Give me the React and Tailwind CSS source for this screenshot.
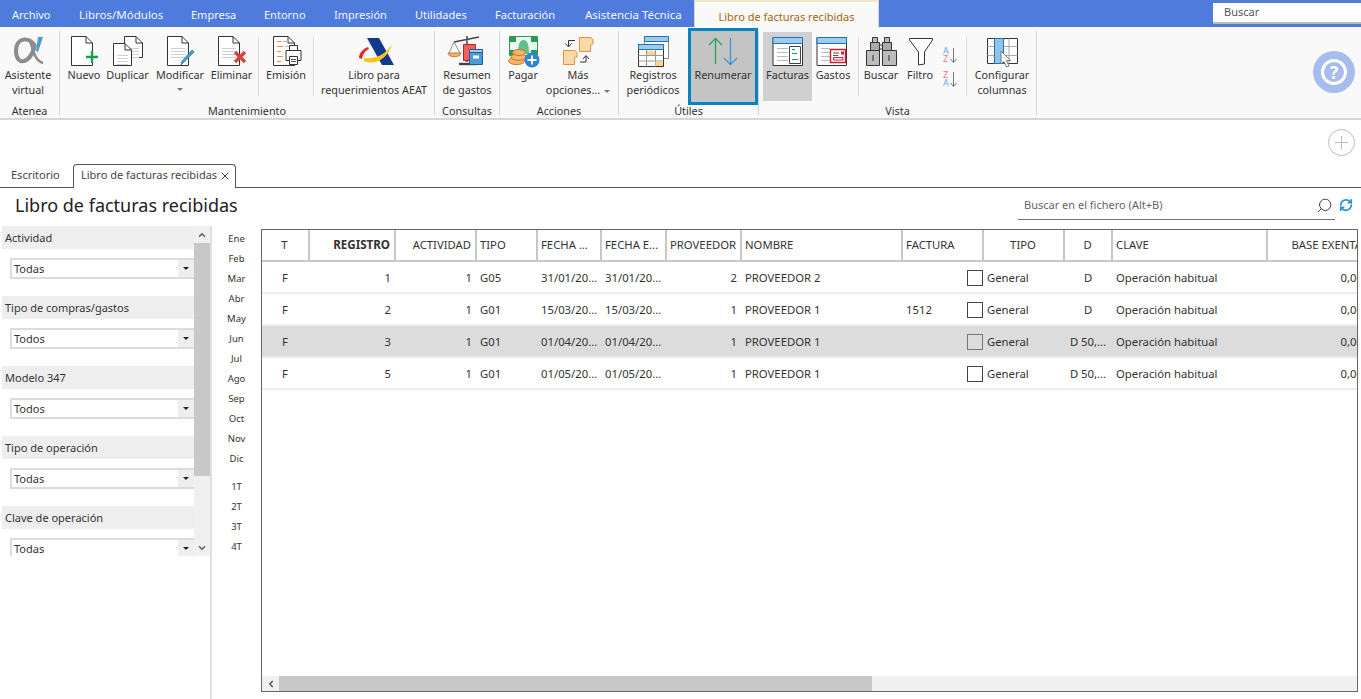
import React from 'react';
import { ChevronUp, ChevronDown, ChevronLeft, X, Search, RefreshCw } from 'lucide-react';

const Svg = ({ children }) => (
  <svg width="48" height="34" viewBox="0 0 48 34" fill="none" className="block shrink-0 overflow-visible">
    {children}
  </svg>
);

// hoja con la esquina doblada
const Doc = ({ x, y, w, h, lines = false }) => (
  <g stroke="#333" strokeWidth="1">
    <path d={`M${x + 0.5} ${y + 0.5}H${x + w - 7}L${x + w - 0.5} ${y + 7}V${y + h - 0.5}H${x + 0.5}Z`} fill="#fff" />
    <path d={`M${x + w - 7} ${y + 0.5}V${y + 7}H${x + w - 0.5}`} />
    {lines && (
      <g stroke="#d0d0d0">
        <path d={`M${x + 4} ${y + 12.5}H${x + w - 4}M${x + 4} ${y + 15.5}H${x + w - 4}M${x + 4} ${y + 18.5}H${x + w - 4}M${x + 4} ${y + 21.5}H${x + w - 4}`} />
      </g>
    )}
  </g>
);

const icons = {
  alpha: (
    <Svg>
      <path d="M31 12C27 3 12 2 12 17C12 32 26 31 31 11" stroke="#8c8c8c" strokeWidth="4" />
      <path d="M24 5C29 8 28 26 39 29" stroke="#8c8c8c" strokeWidth="2.6" />
      <path d="M34 3L39 3L34 18L32 17Z" fill="#4a9bd8" />
    </Svg>
  ),
  nuevo: (
    <Svg>
      <Doc x={11} y={2} w={22} h={30} />
      <path d="M26 23H38M32 17V29" stroke="#12a150" strokeWidth="2.4" />
    </Svg>
  ),
  duplicar: (
    <Svg>
      <Doc x={20} y={2} w={19} h={22} lines />
      <Doc x={9} y={9} w={19} h={23} lines />
    </Svg>
  ),
  modificar: (
    <Svg>
      <Doc x={11} y={2} w={22} h={30} lines />
      <path d="M38 18L28 28L25 31L26 27L36 16Z" fill="#4a9bd8" stroke="#2a7ab8" strokeWidth="0.8" />
    </Svg>
  ),
  eliminar: (
    <Svg>
      <Doc x={10} y={2} w={22} h={30} lines />
      <path d="M27 18L37 28M37 18L27 28" stroke="#e23d3d" strokeWidth="3.2" />
    </Svg>
  ),
  emision: (
    <Svg>
      <Doc x={11} y={2} w={22} h={30} />
      <path d="M15 7.5H19M15 12.5H21M15 17.5H19M15 22.5H21M15 27.5H19" stroke="#e8963c" />
      <path d="M21 7.5H26M23 12.5H28" stroke="#bbb" />
      <path d="M27.5 11.5H35.5V16.5H27.5Z" fill="#fff" stroke="#333" />
      <path d="M24 16.5H39V26.5H24Z" fill="#fff" stroke="#333" />
      <path d="M27.5 22.5H35.5V30.5H27.5Z" fill="#fff" stroke="#333" />
      <path d="M29 25.5H34M29 27.5H34" stroke="#555" />
    </Svg>
  ),
  aeat: (
    <Svg>
      <path d="M17 4H29L44 31H32Z" fill="#123a8c" />
      <path d="M14 27C26 32 38 24 42 10C38 16 30 26 14 24Z" fill="#f7c51e" />
      <path d="M9 24C9 19 13 15 18 13L19 15C15 17 13 20 12 25Z" fill="#e02a2a" />
    </Svg>
  ),
  resumen: (
    <Svg>
      <path d="M24 2V28M11 8L36 3" stroke="#444" strokeWidth="1.5" />
      <path d="M11 8L6 19M11 8L17 19" stroke="#777" strokeWidth="0.8" />
      <path d="M5 19H18C17 24 6 24 5 19Z" fill="#f2b36b" stroke="#c57a2a" />
      <path d="M16 30H34" stroke="#444" strokeWidth="2.4" />
      <path d="M20.5 10.5H32.5V26.5H20.5Z" fill="#f25d5d" stroke="#b02525" />
      <path d="M26.5 15.5H39.5V30.5H26.5Z" fill="#4a9bd8" stroke="#1f5f96" />
      <path d="M26.5 15.5H39.5V18.5H26.5Z" fill="#9fcbee" stroke="#1f5f96" />
      <path d="M30 21.5H36V24.5H30Z" fill="#fff" />
    </Svg>
  ),
  pagar: (
    <Svg>
      <path d="M10.5 2.5H38.5V21.5H10.5Z" fill="#eaf7ef" stroke="#2a9a55" />
      <path d="M11 3H17V8H11ZM32 3H38V8H32ZM11 16H17V21H11ZM32 16H38V21H32Z" fill="#2a9a55" />
      <path d="M19 20C19 10 21 6 24.5 6C28 6 30 10 30 20Z" fill="#5fc08a" />
      <ellipse cx="17.5" cy="27" rx="8" ry="3.6" fill="#f5b56c" stroke="#c9772a" />
      <ellipse cx="19.5" cy="23" rx="7.5" ry="3.3" fill="#f5b56c" stroke="#c9772a" />
      <ellipse cx="20" cy="18.5" rx="6.5" ry="3" fill="#f5b56c" stroke="#c9772a" />
      <circle cx="33" cy="26" r="7.5" fill="#2d86cf" />
      <path d="M33 21.5V30.5M28.5 26H37.5" stroke="#fff" strokeWidth="1.8" />
    </Svg>
  ),
  mas: (
    <Svg>
      <path d="M25.5 3.5H36.5L39 5.5V10L36.5 11V17.5H25.5Z" fill="#fbd9a9" stroke="#e0913c" />
      <path d="M9.5 16.5H20.5L23 18.5V23L20.5 24V30.5H9.5Z" fill="#fbd9a9" stroke="#e0913c" />
      <path d="M21 6.5H14.5V12M11.5 9.5L14.5 13L17.5 9.5" stroke="#333" />
      <path d="M26 28H32V22M29 25L32 21.5L35 25" stroke="#333" />
    </Svg>
  ),
  registros: (
    <Svg>
      <path d="M15.5 2.5H39.5V24.5H15.5Z" fill="#fff" stroke="#888" />
      <path d="M15.5 2.5H39.5V7.5H15.5Z" fill="#9fcbee" stroke="#1f73b0" />
      <path d="M9.5 10.5H34.5V32.5H9.5Z" fill="#fff" stroke="#333" />
      <path d="M9.5 10.5H34.5V15.5H9.5Z" fill="#9fcbee" stroke="#1f73b0" />
      <path d="M17.5 15.5V32.5M26.5 15.5V32.5M9.5 21.5H34.5M9.5 27H34.5" stroke="#999" />
      <path d="M18 17H26V21H18ZM26.5 27.5H34V32H26.5Z" fill="#f8d58e" />
    </Svg>
  ),
  renumerar: (
    <Svg>
      <path d="M16.5 30V5M10 11L16.5 4.5L23 11" stroke="#27a35c" strokeWidth="1.3" />
      <path d="M31.5 4V30M25 24L31.5 30.5L38 24" stroke="#3d94d6" strokeWidth="1.3" />
    </Svg>
  ),
  facturas: (
    <Svg>
      <path d="M9 3.5H38.5V31.5H9Z" fill="#fff" stroke="#333" />
      <path d="M9 3.5H38.5V9.5H9Z" fill="#9fcbee" stroke="#1f73b0" />
      <path d="M13 14.5H24M13 18.5H24M13 22.5H24M13 26.5H24" stroke="#bbb" />
      <path d="M25.5 12.5H36.5V29.5H25.5Z" fill="#fff" stroke="#444" />
      <path d="M28 15.5H31M28 19.5H33M28 25.5H34" stroke="#12a150" />
    </Svg>
  ),
  gastos: (
    <Svg>
      <path d="M8 3.5H37.5V31.5H8Z" fill="#fff" stroke="#333" />
      <path d="M8 3.5H37.5V9.5H8Z" fill="#9fcbee" stroke="#1f73b0" />
      <path d="M12 14.5H21M12 18.5H21M12 22.5H21M12 26.5H21" stroke="#bbb" />
      <path d="M21.5 15.5H36.5V28.5H21.5Z" fill="#fff" stroke="#c8202f" strokeWidth="1.4" />
      <path d="M24 19H30M24 21.5H29" stroke="#555" />
      <path d="M32 17.5H35V20.5H32Z" fill="#c8202f" />
      <path d="M24.5 23.5H34V26H24.5Z" stroke="#c8202f" />
    </Svg>
  ),
  buscar: (
    <Svg>
      <path d="M15.5 3.5H20.5V9.5H15.5ZM27.5 3.5H32.5V9.5H27.5Z" fill="#bbb" stroke="#333" />
      <path d="M13.5 8.5H22.5V18.5H13.5ZM25.5 8.5H34.5V18.5H25.5Z" fill="#aaa" stroke="#333" />
      <path d="M9.5 16.5H22.5V31.5H9.5ZM25.5 16.5H39.5V31.5H25.5Z" fill="#bcbcbc" stroke="#333" />
      <path d="M22.5 11H25.5V15H22.5Z" fill="#fff" stroke="#333" />
      <path d="M16 21V27M32 21V27" stroke="#333" />
    </Svg>
  ),
  filtro: (
    <Svg>
      <path d="M13.5 4.5H36.5V6L28.5 18V30L22.5 31V18L13.5 6Z" fill="#fff" stroke="#333" />
    </Svg>
  ),
  configurar: (
    <Svg>
      <path d="M9.5 4.5H39.5V29.5H9.5Z" fill="#fff" stroke="#333" />
      <path d="M9.5 12.5H39.5M9.5 21.5H39.5M31 4.5V29.5" stroke="#aaa" />
      <path d="M16.5 4.5H25.5V29.5H16.5Z" fill="#8fc3ec" stroke="#1f73b0" />
      <path d="M23 17L23 30L26 27.5L28.5 33L31 32L28.5 26.5H32.5Z" fill="#fff" stroke="#777" />
    </Svg>
  ),
};

const SortIcon = ({ first, second, firstColor, secondColor }) => (
  <div className="relative h-[16px] w-[16px]">
    <span className={`absolute left-0 top-0 text-[9px] leading-[8px] ${firstColor}`}>{first}</span>
    <span className={`absolute left-0 top-[8px] text-[9px] leading-[8px] ${secondColor}`}>{second}</span>
    <svg width="16" height="16" viewBox="0 0 16 16" fill="none" className="absolute left-0 top-0">
      <path d="M10.5 1V15M7.5 12L10.5 15.5L13.5 12" stroke="#777" />
    </svg>
  </div>
);

const Sep = ({ className }) => <div className={`mt-[6px] h-[59px] w-px shrink-0 bg-[#dcdcdc] ${className}`} />;

const RibbonButton = ({ icon, lines, className = '', caret, inlineCaret }) => (
  <div className={`flex h-full shrink-0 flex-col items-center pt-[3px] text-center leading-[15px] text-[#333] ${className}`}>
    <div className="mb-[-1px]">{icons[icon]}</div>
    {lines.map((t, i) => (
      <div key={i} className="whitespace-nowrap">
        {t}
        {inlineCaret && i === lines.length - 1 && <span className="ml-[4px] inline-block h-0 w-0 border-x-[3px] border-t-[3px] border-x-transparent border-t-[#777] align-middle" />}
      </div>
    ))}
    {caret && <span className="mt-[6px] h-0 w-0 border-x-[3px] border-t-[3px] border-x-transparent border-t-[#777]" />}
  </div>
);

const Group = ({ label, className, children }) => (
  <div className={`flex h-[84px] shrink-0 flex-col border-r border-[#d4d4d4] ${className}`}>
    <div className="flex h-[73px]">{children}</div>
    <div className="h-[11px] text-center leading-[14px] text-[#333]">{label}</div>
  </div>
);

const Ribbon = () => (
  <div className="flex h-[93px] items-start border-b-2 border-[#d6d6d6] bg-[#f9f9f9] pt-[4px] text-[10.8px]">
    <Group label="Atenea" className="w-[60px]">
      <RibbonButton icon="alpha" lines={['Asistente', 'virtual']} className="w-[56px]" />
    </Group>
    <Group label="Mantenimiento" className="w-[375px]">
      <RibbonButton icon="nuevo" lines={['Nuevo']} className="ml-[6px] w-[36px]" />
      <RibbonButton icon="duplicar" lines={['Duplicar']} className="ml-[3px] w-[45px]" />
      <RibbonButton icon="modificar" lines={['Modificar']} caret className="ml-[5px] w-[50px]" />
      <RibbonButton icon="eliminar" lines={['Eliminar']} className="ml-[5px] w-[43px]" />
      <Sep className="ml-[5px]" />
      <RibbonButton icon="emision" lines={['Emisión']} className="ml-[6px] w-[42px]" />
      <Sep className="ml-[6px]" />
      <RibbonButton icon="aeat" lines={['Libro para', 'requerimientos AEAT']} className="ml-[6px] w-[108px]" />
    </Group>
    <Group label="Consultas" className="w-[65px]">
      <RibbonButton icon="resumen" lines={['Resumen', 'de gastos']} className="w-[64px]" />
    </Group>
    <Group label="Acciones" className="w-[119px]">
      <RibbonButton icon="pagar" lines={['Pagar']} className="ml-[6px] w-[34px]" />
      <RibbonButton icon="mas" lines={['Más', 'opciones...']} inlineCaret className="ml-[8px] w-[60px]" />
    </Group>
    <Group label="Útiles" className="w-[140px]">
      <RibbonButton icon="registros" lines={['Registros', 'periódicos']} className="ml-[6px] w-[56px]" />
      <RibbonButton icon="renumerar" lines={['Renumerar']} className="relative z-10 -mt-[3px] ml-[7px] !h-[77px] w-[70px] border-[3px] border-[#0a82bf] bg-[#c4c4c4]" />
    </Group>
    <Group label="Vista" className="w-[278px]">
      <RibbonButton icon="facturas" lines={['Facturas']} className="ml-[4px] mt-[1px] !h-[69px] w-[49px] bg-[#d0d0d0] !pt-[2px]" />
      <RibbonButton icon="gastos" lines={['Gastos']} className="ml-[1px] w-[40px]" />
      <Sep className="ml-[5px]" />
      <RibbonButton icon="buscar" lines={['Buscar']} className="ml-[5px] w-[34px]" />
      <RibbonButton icon="filtro" lines={['Filtro']} className="ml-[5px] w-[34px]" />
      <div className="ml-[6px] flex w-[16px] shrink-0 flex-col gap-[8px] pt-[16px]">
        <SortIcon first="A" second="Z" firstColor="text-[#6aa8e0]" secondColor="text-[#e87a7a]" />
        <SortIcon first="Z" second="A" firstColor="text-[#e87a7a]" secondColor="text-[#6aa8e0]" />
      </div>
      <Sep className="ml-[7px]" />
      <RibbonButton icon="configurar" lines={['Configurar', 'columnas']} className="ml-[3px] w-[64px]" />
    </Group>
    <div className="ml-[276px] mt-[20px] flex h-[42px] w-[42px] items-center justify-center rounded-full bg-[#a7bdee]">
      <div className="flex h-[26px] w-[26px] items-center justify-center rounded-full border-[3px] border-white text-[17px] font-bold leading-none text-white">?</div>
    </div>
  </div>
);

const menu = [
  { t: 'Libros/Módulos', c: 'w-[84px] text-[11.5px]' },
  { t: 'Empresa', c: 'w-[45px]' },
  { t: 'Entorno', c: 'w-[42px]' },
  { t: 'Impresión', c: 'w-[53px]' },
  { t: 'Utilidades', c: 'w-[52px]' },
  { t: 'Facturación', c: 'w-[62px]' },
  { t: 'Asistencia Técnica', c: 'w-[95px] text-[11.5px]' },
];

const TitleBar = () => (
  <div className="flex h-[27px] bg-[#4e7bdc] text-[#f4f6fc]">
    <div className="w-[65px] pl-[12px] leading-[30px]">Archivo</div>
    <div className="flex gap-[28px] pl-[14px]">
      {menu.map((m) => (
        <div key={m.t} className={`whitespace-nowrap leading-[30px] ${m.c}`}>{m.t}</div>
      ))}
    </div>
    <div className="absolute left-[694px] top-0 h-[28px] w-[185px] border-x border-t-2 border-[#d6d6d6] border-t-[#f3e9c4] bg-[#f9f9f9] text-center leading-[29px] text-[#a8650f]">
      Libro de facturas recibidas
    </div>
    <div className="ml-auto mt-[3px] h-[21px] w-[148px] border-b-2 border-[#bbb] bg-white pl-[11px] leading-[17px] text-[#555]">Buscar</div>
  </div>
);

const filters = [
  ['Actividad', 'Todas'],
  ['Tipo de compras/gastos', 'Todos'],
  ['Modelo 347', 'Todos'],
  ['Tipo de operación', 'Todas'],
  ['Clave de operación', 'Todas'],
];

const FilterPanel = () => (
  <div className="flex h-full w-[212px] shrink-0 items-start border-r-2 border-[#e0e0e0]">
    <div className="h-[330px] w-[194px] shrink-0 overflow-hidden">
      {filters.map(([label, value]) => (
        <div key={label} className="h-[70px] pl-[2px]">
          <div className="h-[23px] bg-[#eeeeee] pl-[3px] leading-[23px] text-[#333]">{label}</div>
          <div className="ml-[8px] mt-[9px] flex h-[21px] border-2 border-r-0 border-[#dcdcdc] bg-white">
            <div className="flex-1 pl-[2px] leading-[18px] text-[#333]">{value}</div>
            <div className="flex w-[16px] items-center justify-center bg-[#eeeeee]">
              <span className="h-0 w-0 border-x-[3px] border-t-[3px] border-x-transparent border-t-[#222]" />
            </div>
          </div>
        </div>
      ))}
    </div>
    <div className="flex h-[330px] w-[16px] shrink-0 flex-col bg-[#f0f0f0]">
      <div className="flex h-[17px] items-center justify-center"><ChevronUp size={10} strokeWidth={4} color="#666" /></div>
      <div className="h-[233px] bg-[#c8c8c8]" />
      <div className="flex-1" />
      <div className="flex h-[16px] items-center justify-center"><ChevronDown size={10} strokeWidth={4} color="#666" /></div>
    </div>
  </div>
);

const months = ['Ene', 'Feb', 'Mar', 'Abr', 'May', 'Jun', 'Jul', 'Ago', 'Sep', 'Oct', 'Nov', 'Dic'];
const quarters = ['1T', '2T', '3T', '4T'];

const Months = () => (
  <div className="w-[49px] shrink-0 pt-[3px] text-center text-[9.5px] leading-[20px] text-[#333]">
    {months.map((m) => <div key={m} className="h-[20px]">{m}</div>)}
    <div className="h-[8px]" />
    {quarters.map((m) => <div key={m} className="h-[20px]">{m}</div>)}
  </div>
);

const cols = [
  { key: 't', label: 'T', w: 'w-[48px]', h: 'justify-center', c: 'justify-center' },
  { key: 'reg', label: 'REGISTRO', w: 'w-[86px]', h: 'justify-end font-bold text-[11.6px]', c: 'justify-end' },
  { key: 'act', label: 'ACTIVIDAD', w: 'w-[81px]', h: 'justify-end', c: 'justify-end' },
  { key: 'tipo', label: 'TIPO', w: 'w-[61px]', h: '', c: '' },
  { key: 'f1', label: 'FECHA ...', w: 'w-[64px]', h: '', c: '' },
  { key: 'f2', label: 'FECHA E...', w: 'w-[65px]', h: '', c: '' },
  { key: 'prov', label: 'PROVEEDOR', w: 'w-[75px]', h: '', c: 'justify-end' },
  { key: 'nom', label: 'NOMBRE', w: 'w-[161px]', h: '', c: '' },
  { key: 'fac', label: 'FACTURA', w: 'w-[81px]', h: '', c: '' },
  { key: 'tipo2', label: 'TIPO', w: 'w-[81px]', h: 'justify-center', c: '' },
  { key: 'd', label: 'D', w: 'w-[48px]', h: 'justify-center', c: 'justify-center' },
  { key: 'clave', label: 'CLAVE', w: 'w-[155px]', h: '', c: '' },
  { key: 'base', label: 'BASE EXENTA', w: 'w-[104px]', h: 'justify-end !pr-[8px]', c: 'justify-end !pr-[9px]' },
];

const rows = [
  { t: 'F', reg: '1', act: '1', tipo: 'G05', f1: '31/01/20...', f2: '31/01/20...', prov: '2', nom: 'PROVEEDOR 2', fac: '', tipo2: 'General', d: 'D', clave: 'Operación habitual', base: '0,00' },
  { t: 'F', reg: '2', act: '1', tipo: 'G01', f1: '15/03/20...', f2: '15/03/20...', prov: '1', nom: 'PROVEEDOR 1', fac: '1512', tipo2: 'General', d: 'D', clave: 'Operación habitual', base: '0,00' },
  { t: 'F', reg: '3', act: '1', tipo: 'G01', f1: '01/04/20...', f2: '01/04/20...', prov: '1', nom: 'PROVEEDOR 1', fac: '', tipo2: 'General', d: 'D 50,...', clave: 'Operación habitual', base: '0,00', selected: true },
  { t: 'F', reg: '5', act: '1', tipo: 'G01', f1: '01/05/20...', f2: '01/05/20...', prov: '1', nom: 'PROVEEDOR 1', fac: '', tipo2: 'General', d: 'D 50,...', clave: 'Operación habitual', base: '0,00' },
];

const Grid = () => (
  <div className="mb-[7px] mr-[3px] mt-[3px] flex min-w-0 flex-1 flex-col overflow-hidden border border-[#666]">
    <div className="min-h-0 flex-1 overflow-hidden text-[11.3px] text-[#333]">
      <div className="flex h-[32px] w-[1110px] border-b-2 border-[#c8c8c8]">
        {cols.map((c) => (
          <div key={c.key} className={`flex shrink-0 items-center overflow-hidden whitespace-nowrap border-r-2 border-[#c8c8c8] pl-[3px] pr-[4px] ${c.w} ${c.h}`}>
            {c.label}
          </div>
        ))}
      </div>
      {rows.map((r) => (
        <div key={r.reg} className={`flex h-[32px] w-[1110px] border-b-2 pt-[2px] ${r.selected ? 'border-[#e8e8e8] bg-[#dcdcdc]' : 'border-[#eeeeee]'}`}>
          {cols.map((c) => (
            <div key={c.key} className={`flex shrink-0 items-center overflow-hidden whitespace-nowrap pl-[3px] pr-[5px] ${c.w} ${c.c}`}>
              <span className="flex-none">{r[c.key]}</span>
              {c.key === 'fac' && <span className={`-mr-[4px] ml-auto h-[16px] w-[16px] border ${r.selected ? 'border-[#777]' : 'border-[#444] bg-white'}`} />}
            </div>
          ))}
        </div>
      ))}
    </div>
    <div className="flex h-[15px] shrink-0 bg-[#f0f0f0]">
      <div className="flex w-[17px] items-center justify-center"><ChevronLeft size={10} strokeWidth={4} color="#555" /></div>
      <div className="h-full w-[593px] bg-[#c8c8c8]" />
    </div>
  </div>
);

const App = () => (
  <div className="relative flex h-[699px] w-[1361px] flex-col overflow-hidden bg-white font-['Noto_Sans',sans-serif] text-[11px]">
    <TitleBar />
    <Ribbon />
    <div className="flex h-[44px] justify-end pr-[6px] pt-[9px]">
      <div className="relative h-[27px] w-[27px] rounded-full border border-[#bbb]">
        <div className="absolute left-[6px] top-[12px] h-px w-[13px] bg-[#bbb]" />
        <div className="absolute left-[12px] top-[6px] h-[13px] w-px bg-[#bbb]" />
      </div>
    </div>
    <div className="flex h-[24px] items-end border-b border-[#555] pl-[11px] text-[#444]">
      <div className="w-[62px] pb-[4px]">Escritorio</div>
      <div className="-mb-px flex h-[24px] w-[163px] items-center rounded-t-[4px] border border-b-0 border-[#555] bg-white pb-[2px] pl-[7px]">
        Libro de facturas recibidas
        <X size={12} strokeWidth={1.8} color="#222" className="ml-[2px]" />
      </div>
    </div>
    <div className="flex h-[38px] shrink-0 items-start pl-[15px]">
      <h1 className="text-[18px] leading-[34px] text-[#222]">Libro de facturas recibidas</h1>
      <div className="ml-auto mr-[26px] mt-[4px] h-[28px] w-[317px] border-b border-[#777] pl-[6px] leading-[26px] text-[#666]">
        Buscar en el fichero (Alt+B)
      </div>
      <div className="absolute right-[28px] top-[197px]"><Search size={17} strokeWidth={1.2} color="#222" className="-scale-x-100" /></div>
      <div className="absolute right-[8px] top-[198px]"><RefreshCw size={14} strokeWidth={3} color="#2f8fd8" /></div>
    </div>
    <div className="flex min-h-0 flex-1">
      <FilterPanel />
      <Months />
      <Grid />
    </div>
  </div>
);

export default App;
